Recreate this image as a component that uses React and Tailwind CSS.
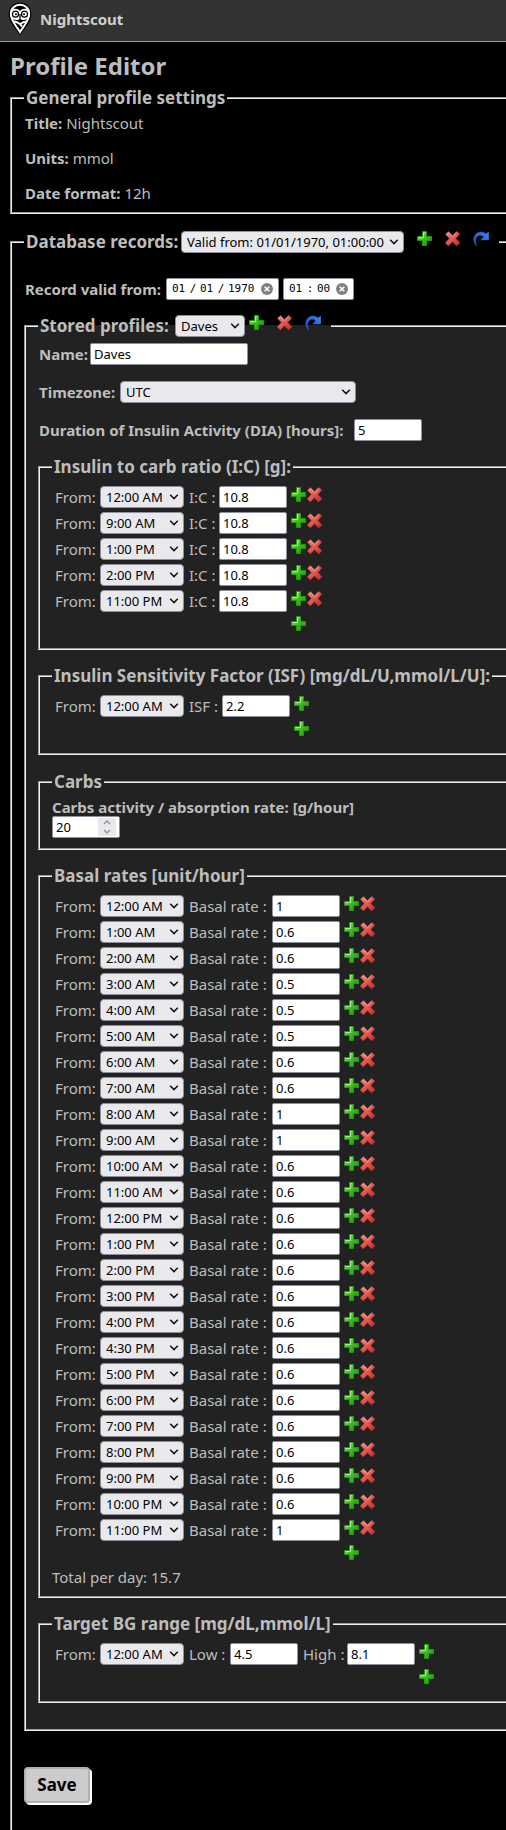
import React, { useId } from "react";

const fieldset = "min-w-0 border-2 border-r-0 border-[#f0f0f0] [border-style:groove]";
const legend = "flex h-[22px] items-center whitespace-nowrap px-0.5 text-[17px] font-bold leading-[22px]";
const box = "h-[22px] rounded-[2px] border border-[#8f8f9d] bg-white px-[3px] text-[13px] leading-5 text-black";

const hours = ["12:00", "1:00", "2:00", "3:00", "4:00", "5:00", "6:00", "7:00", "8:00", "9:00", "10:00", "11:00"];
const times = [...hours.map((h) => h + " AM"), ...hours.map((h) => h + " PM")];
times.splice(17, 0, "4:30 PM");

const basalValues = [
  "1", "0.6", "0.6", "0.5", "0.5", "0.5", "0.6", "0.6", "1", "1", "0.6", "0.6", "0.6",
  "0.6", "0.6", "0.6", "0.6", "0.6", "0.6", "0.6", "0.6", "0.6", "0.6", "0.6", "1",
];

function Gradients() {
  return (
    <svg width="0" height="0" className="absolute" aria-hidden="true">
      <defs>
        <linearGradient id="green" x1="0" y1="0" x2="1" y2="1">
          <stop offset="0" stopColor="#8be36a" />
          <stop offset="0.5" stopColor="#3fbf22" />
          <stop offset="1" stopColor="#1b8a00" />
        </linearGradient>
        <linearGradient id="red" x1="0" y1="0" x2="1" y2="1">
          <stop offset="0" stopColor="#f58a80" />
          <stop offset="1" stopColor="#d02420" />
        </linearGradient>
        <linearGradient id="blue" x1="1" y1="0" x2="0" y2="1">
          <stop offset="0" stopColor="#3f86f5" />
          <stop offset="1" stopColor="#1c46b4" />
        </linearGradient>
      </defs>
    </svg>
  );
}

function Add() {
  return (
    <button type="button" aria-label="Add" className="size-4 shrink-0">
      <svg viewBox="0 0 16 16" className="size-4">
        <path d="M5.5 .5h4v5h5v4h-5v5h-4v-5h-5v-4h5z" fill="url(#green)" stroke="#239a0a" />
        <path d="M1.5 6.5h5v-5h1.5" fill="none" stroke="#a9ee90" />
      </svg>
    </button>
  );
}

function Remove() {
  return (
    <button type="button" aria-label="Remove" className="size-4 shrink-0">
      <svg viewBox="0 0 16 16" className="size-4">
        <path
          d="M3.4 .6 7.5 4.4 11.6 .5 14.6 2.9 10.8 7.5 14.7 11.8 11.7 14.8 7.5 10.8 3.3 14.8 .4 12 4.3 7.5 .5 3.2z"
          fill="url(#red)"
          stroke="#c63a34"
          strokeWidth=".8"
          strokeLinejoin="round"
        />
        <path d="M2 3.2 3.4 1.8 7.5 5.8 11.5 1.9" fill="none" stroke="#f7a49c" strokeWidth=".9" />
      </svg>
    </button>
  );
}

function Redo() {
  return (
    <button type="button" aria-label="Copy" className="size-4 shrink-0">
      <svg viewBox="0 0 16 16" className="size-4">
        <path
          d="M3.6 15C.2 11.6-.2 6.6 2.6 3.4 5.6.2 10.2.2 13 3L15.8.8V9H7.8L10.6 5.8C8.4 3.8 5.4 3.8 3.6 6.4 2.2 8.6 2.4 11.8 3.6 15z"
          fill="url(#blue)"
          stroke="#2c62cf"
          strokeWidth=".5"
        />
      </svg>
    </button>
  );
}

function Select({ id, value, options, width, label }) {
  return (
    <div className={"relative h-[22px] shrink-0 font-normal " + width}>
      <select
        id={id}
        aria-label={label}
        defaultValue={value}
        className="block h-[22px] w-full appearance-none rounded border border-[#8f8f9d] bg-[#e9e9ed] pl-[5px] text-[13px] leading-5 text-black"
      >
        {options.map((o) => (
          <option key={o}>{o}</option>
        ))}
      </select>
      <svg viewBox="0 0 10 6" className="pointer-events-none absolute right-[5px] top-2 h-1.5 w-2.5">
        <path d="M1.2 .8 5 4.6 8.8 .8" fill="none" stroke="#111" strokeWidth="1.5" />
      </svg>
    </div>
  );
}

function TimeRow({ time, fields, removable }) {
  const id = useId();
  return (
    <div className="flex h-[22px] items-center">
      <label htmlFor={id} className="w-[45px]">From:</label>
      <Select id={id} value={time} options={times} width="w-[84px]" />
      {fields.map(([name, value, width]) => (
        <React.Fragment key={name}>
          <label htmlFor={id + name} className={"ml-[5px] shrink-0 whitespace-nowrap " + width}>{name} :</label>
          <input id={id + name} defaultValue={value} className={box + " w-[68px]"} />
        </React.Fragment>
      ))}
      <div className="ml-1 flex self-start pt-px">
        <Add />
        {removable && <Remove />}
      </div>
    </div>
  );
}

function Schedule({ title, rows, indent, top, children }) {
  return (
    <fieldset className={fieldset + " " + top}>
      <legend className={legend + " ml-3"}>{title}</legend>
      <div className="flex flex-col gap-1 pl-[15px] pt-2">
        {rows.map((row, i) => (
          <TimeRow key={i} {...row} removable={rows.length > 1} />
        ))}
        <div className={"h-[17px] " + indent}>
          <Add />
        </div>
      </div>
      {children || <div className="h-[15px]" />}
    </fieldset>
  );
}

function ClearButton({ label }) {
  return (
    <button type="button" aria-label={label} className="size-3">
      <svg viewBox="0 0 12 12" className="size-3">
        <circle cx="6" cy="6" r="6" fill="#808080" />
        <path d="M3.7 3.7 8.3 8.3M8.3 3.7 3.7 8.3" stroke="#fff" strokeWidth="1.5" />
      </svg>
    </button>
  );
}

function Segments({ parts, separator, clear }) {
  return (
    <div className="flex h-[22px] items-center rounded-[2px] border border-[#8f8f9d] bg-white px-[5px] font-['DejaVu_Sans_Mono',monospace] text-[11px] text-black">
      {parts.map(([name, value, width], i) => (
        <React.Fragment key={name}>
          {i > 0 && <span className="w-[14px] text-center">{separator}</span>}
          <input aria-label={name} defaultValue={value} className={"h-5 " + width} />
        </React.Fragment>
      ))}
      <span className="ml-[5px] flex">
        <ClearButton label={clear} />
      </span>
    </div>
  );
}

function Logo() {
  return (
    <svg viewBox="0 0 24 34" className="h-[34px] w-6">
      <path d="M12 .5C5.5 .5 .6 5.2 .6 12c0 8 6.4 13.5 11.4 21.5C17 25.5 23.4 20 23.4 12 23.4 5.2 18.5 .5 12 .5z" fill="#000" />
      <path d="M12 2.8C7 2.8 2.8 6.5 2.8 12c0 6.6 5.2 11.400 9.200 18 4-6.600 9.200-11.400 9.200-18 0-5.500-4.200-9.200-9.200-9.200z" fill="none" stroke="#fff" strokeWidth="2" />
      <path d="M3.500 8.500C6 6 9.500 6.500 12 9c2.500-2.500 6-3 8.500-.5l.5 7c-3 3-6.500 3-9 1.500-2.500 1.500-6 1.500-9-1.500z" fill="#fff" />
      <circle cx="7.500" cy="12.200" r="3" fill="#fff" stroke="#000" strokeWidth="1.200" />
      <circle cx="16.500" cy="12.200" r="3" fill="#fff" stroke="#000" strokeWidth="1.200" />
      <circle cx="8" cy="12.200" r="1" />
      <circle cx="16" cy="12.200" r="1" />
      <path d="M12 12v5" stroke="#000" strokeWidth="1.300" />
      <path d="M5 19.500c4 0 7 2 9 5M19 19.500c-2.500 0-5 1-6.500 2.500" fill="none" stroke="#fff" strokeWidth="2" />
    </svg>
  );
}

export default function App() {
  return (
    <div className="min-h-screen overflow-hidden bg-black font-['Noto_Sans',sans-serif] text-[15px] leading-5 text-[#bdbdbd]">
      <Gradients />
      <header className="flex h-[42px] items-center border-b border-[#999] bg-[#333] pl-2 text-[15px] font-bold">
        <a href="#home" className="flex items-center gap-2 pb-1">
          <Logo />
          <span className="text-[#d0d0d0]">Nightscout</span>
        </a>
      </header>
      <main className="pl-2.5 pt-2">
        <h1 className="mb-[5px] text-2xl font-bold leading-8">Profile Editor</h1>

        <fieldset className={fieldset}>
          <legend className={legend + " ml-3"}>General profile settings</legend>
          <div className="flex flex-col gap-[15px] pb-[9px] pl-[13px] pt-1">
            <p><b>Title:</b> Nightscout</p>
            <p><b>Units:</b> mmol</p>
            <p><b>Date format:</b> 12h</p>
          </div>
        </fieldset>

        <form onSubmit={(e) => e.preventDefault()}>
          <fieldset className={fieldset + " mt-[17px] border-b-0 pl-3"}>
            <legend className={legend}>
              <label htmlFor="record" className="w-[155px]">Database records:</label>
              <Select id="record" width="w-[223px]" value="Valid from: 01/01/1970, 01:00:00" options={["Valid from: 01/01/1970, 01:00:00"]} />
              <span className="ml-[13px] flex gap-3 self-start pr-2">
                <Add />
                <Remove />
                <Redo />
              </span>
            </legend>

            <div className="flex items-center pt-[25px]">
              <b className="ml-px w-[141px] whitespace-nowrap">Record valid from:</b>
              <Segments
                separator="/"
                clear="Clear date"
                parts={[["Day", "01", "w-[14px]"], ["Month", "01", "w-[14px]"], ["Year", "1970", "w-[28px]"]]}
              />
              <div className="ml-1">
                <Segments separator=":" clear="Clear time" parts={[["Hour", "01", "w-[14px]"], ["Minute", "00", "w-[14px]"]]} />
              </div>
            </div>

            <fieldset className={fieldset + " mt-[15px] bg-[#222] pb-[26px] pl-3"}>
              <legend className={legend}>
                <label htmlFor="profile" className="w-[135px]">Stored profiles:</label>
                <Select id="profile" width="w-[70px]" value="Daves" options={["Daves"]} />
                <span className="ml-1 flex gap-3 self-start pr-2">
                  <Add />
                  <Remove />
                  <Redo />
                </span>
              </legend>

              <div className="flex flex-col gap-4 pl-px pt-1.5 font-bold">
                <div className="flex h-[22px] items-center">
                  <label htmlFor="name" className="w-[51px]">Name:</label>
                  <input id="name" defaultValue="Daves" className={box + " w-[158px] font-normal"} />
                </div>
                <div className="flex h-[22px] items-center">
                  <label htmlFor="zone" className="w-[81px]">Timezone:</label>
                  <Select id="zone" width="w-[236px]" value="UTC" options={["UTC"]} />
                </div>
                <div className="flex h-[22px] items-center">
                  <label htmlFor="dia" className="w-[315px] whitespace-nowrap">Duration of Insulin Activity (DIA) [hours]:</label>
                  <input id="dia" defaultValue="5" className={box + " w-[68px] font-normal"} />
                </div>
              </div>

              <Schedule
                title="Insulin to carb ratio (I:C) [g]:"
                top="mt-[15px]"
                indent="pl-[236px]"
                rows={["12:00 AM", "9:00 AM", "1:00 PM", "2:00 PM", "11:00 PM"].map((time) => ({
                  time,
                  fields: [["I:C", "10.8", "w-[30px]"]],
                }))}
              />
              <Schedule
                title="Insulin Sensitivity Factor (ISF) [mg/dL/U,mmol/L/U]:"
                top="mt-[15px]"
                indent="pl-[239px]"
                rows={[{ time: "12:00 AM", fields: [["ISF", "2.2", "w-[33px]"]] }]}
              />

              <fieldset className={fieldset + " mt-4 pb-2.5 pl-3 pt-[5px]"}>
                <legend className={legend}>Carbs</legend>
                <label htmlFor="carbs" className="block h-[18px] whitespace-nowrap font-bold leading-[18px]">
                  Carbs activity / absorption rate: [g/hour]
                </label>
                <div className="flex h-[22px] w-[68px] items-center rounded-[2px] border border-[#8f8f9d] bg-white pr-[3px]">
                  <input
                    id="carbs"
                    type="number"
                    defaultValue="20"
                    className="h-5 w-full min-w-0 pl-[3px] text-[13px] text-black [appearance:textfield] [&::-webkit-inner-spin-button]:appearance-none"
                  />
                  <span className="flex h-[18px] w-[18px] shrink-0 flex-col items-center bg-[#e9e9ed]">
                    <button type="button" aria-label="Increase" className="flex h-[9px] items-center">
                      <svg viewBox="0 0 8 5" className="h-[5px] w-2"><path d="M1 4 4 1 7 4" fill="none" stroke="#8f8f9d" strokeWidth="1.4" /></svg>
                    </button>
                    <button type="button" aria-label="Decrease" className="flex h-[9px] items-center">
                      <svg viewBox="0 0 8 5" className="h-[5px] w-2"><path d="M1 1 4 4 7 1" fill="none" stroke="#8f8f9d" strokeWidth="1.4" /></svg>
                    </button>
                  </span>
                </div>
              </fieldset>

              <Schedule
                title="Basal rates [unit/hour]"
                top="mt-[15px]"
                indent="pl-[289px]"
                rows={times.map((time, i) => ({ time, fields: [["Basal rate", basalValues[i], "w-[83px]"]] }))}
              >
                <p className="pb-[9px] pl-3 pt-[5px]">Total per day: 15.7</p>
              </Schedule>

              <Schedule
                title="Target BG range [mg/dL,mmol/L]"
                top="mt-[15px]"
                indent="pl-[364px]"
                rows={[{ time: "12:00 AM", fields: [["Low", "4.5", "w-[41px]"], ["High", "8.1", "w-11"]] }]}
              />
            </fieldset>

            <div className="pb-[27px] pt-9">
              <button
                type="submit"
                className="block h-9 w-[66px] rounded border-2 border-[#b0b0b0] bg-[#ccc] text-[17px] font-bold text-black shadow-[2px_2px_0_#fff]"
              >
                Save
              </button>
            </div>
          </fieldset>
        </form>
      </main>
    </div>
  );
}
